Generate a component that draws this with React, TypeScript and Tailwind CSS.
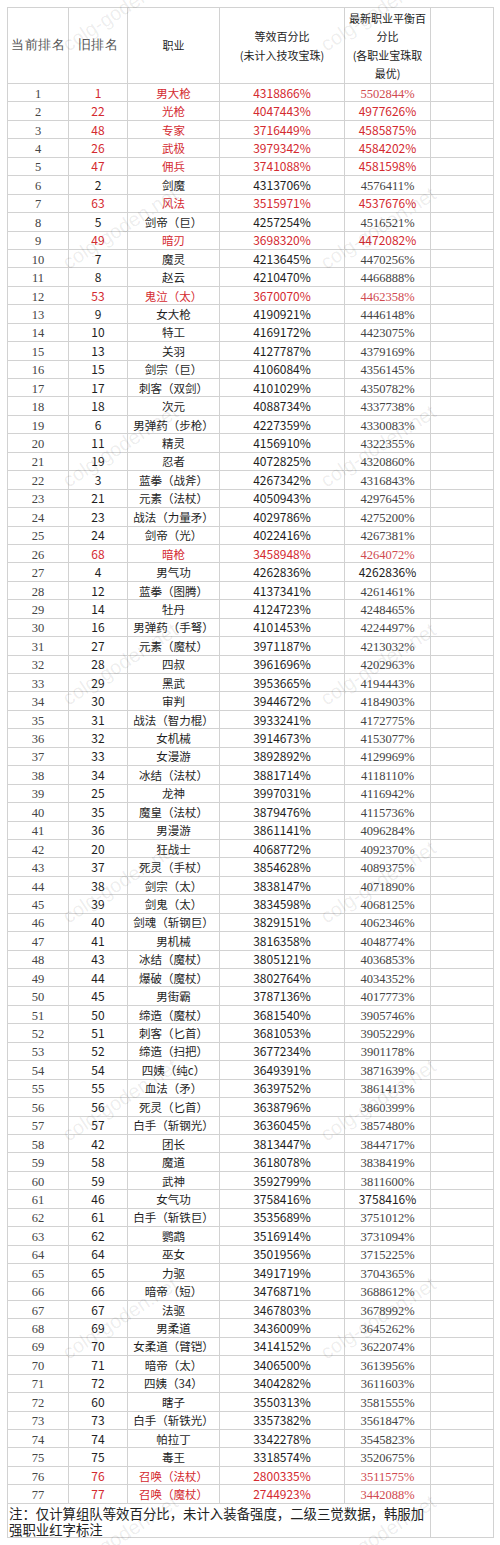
import React from 'react';

type Row = [number, number, string, string, string];

const rows: Row[] = [
  [1, 1, '男大枪', '4318866%', '5502844%'],
  [2, 22, '光枪', '4047443%', '4977626%'],
  [3, 48, '专家', '3716449%', '4585875%'],
  [4, 26, '武极', '3979342%', '4584202%'],
  [5, 47, '佣兵', '3741088%', '4581598%'],
  [6, 2, '剑魔', '4313706%', '4576411%'],
  [7, 63, '风法', '3515971%', '4537676%'],
  [8, 5, '剑帝（巨）', '4257254%', '4516521%'],
  [9, 49, '暗刃', '3698320%', '4472082%'],
  [10, 7, '魔灵', '4213645%', '4470256%'],
  [11, 8, '赵云', '4210470%', '4466888%'],
  [12, 53, '鬼泣（太）', '3670070%', '4462358%'],
  [13, 9, '女大枪', '4190921%', '4446148%'],
  [14, 10, '特工', '4169172%', '4423075%'],
  [15, 13, '关羽', '4127787%', '4379169%'],
  [16, 15, '剑宗（巨）', '4106084%', '4356145%'],
  [17, 17, '刺客（双剑）', '4101029%', '4350782%'],
  [18, 18, '次元', '4088734%', '4337738%'],
  [19, 6, '男弹药（步枪）', '4227359%', '4330083%'],
  [20, 11, '精灵', '4156910%', '4322355%'],
  [21, 19, '忍者', '4072825%', '4320860%'],
  [22, 3, '蓝拳（战斧）', '4267342%', '4316843%'],
  [23, 21, '元素（法杖）', '4050943%', '4297645%'],
  [24, 23, '战法（力量矛）', '4029786%', '4275200%'],
  [25, 24, '剑帝（光）', '4022416%', '4267381%'],
  [26, 68, '暗枪', '3458948%', '4264072%'],
  [27, 4, '男气功', '4262836%', '4262836%'],
  [28, 12, '蓝拳（图腾）', '4137341%', '4261461%'],
  [29, 14, '牡丹', '4124723%', '4248465%'],
  [30, 16, '男弹药（手弩）', '4101453%', '4224497%'],
  [31, 27, '元素（魔杖）', '3971187%', '4213032%'],
  [32, 28, '四叔', '3961696%', '4202963%'],
  [33, 29, '黑武', '3953665%', '4194443%'],
  [34, 30, '审判', '3944672%', '4184903%'],
  [35, 31, '战法（智力棍）', '3933241%', '4172775%'],
  [36, 32, '女机械', '3914673%', '4153077%'],
  [37, 33, '女漫游', '3892892%', '4129969%'],
  [38, 34, '冰结（法杖）', '3881714%', '4118110%'],
  [39, 25, '龙神', '3997031%', '4116942%'],
  [40, 35, '魔皇（法杖）', '3879476%', '4115736%'],
  [41, 36, '男漫游', '3861141%', '4096284%'],
  [42, 20, '狂战士', '4068772%', '4092370%'],
  [43, 37, '死灵（手杖）', '3854628%', '4089375%'],
  [44, 38, '剑宗（太）', '3838147%', '4071890%'],
  [45, 39, '剑鬼（太）', '3834598%', '4068125%'],
  [46, 40, '剑魂（斩钢巨）', '3829151%', '4062346%'],
  [47, 41, '男机械', '3816358%', '4048774%'],
  [48, 43, '冰结（魔杖）', '3805121%', '4036853%'],
  [49, 44, '爆破（魔杖）', '3802764%', '4034352%'],
  [50, 45, '男街霸', '3787136%', '4017773%'],
  [51, 50, '缔造（魔杖）', '3681540%', '3905746%'],
  [52, 51, '刺客（匕首）', '3681053%', '3905229%'],
  [53, 52, '缔造（扫把）', '3677234%', '3901178%'],
  [54, 54, '四姨（纯c）', '3649391%', '3871639%'],
  [55, 55, '血法（矛）', '3639752%', '3861413%'],
  [56, 56, '死灵（匕首）', '3638796%', '3860399%'],
  [57, 57, '白手（斩钢光）', '3636045%', '3857480%'],
  [58, 42, '团长', '3813447%', '3844717%'],
  [59, 58, '魔道', '3618078%', '3838419%'],
  [60, 59, '武神', '3592799%', '3811600%'],
  [61, 46, '女气功', '3758416%', '3758416%'],
  [62, 61, '白手（斩铁巨）', '3535689%', '3751012%'],
  [63, 62, '鹦鹉', '3516914%', '3731094%'],
  [64, 64, '巫女', '3501956%', '3715225%'],
  [65, 65, '力驱', '3491719%', '3704365%'],
  [66, 66, '暗帝（短）', '3476871%', '3688612%'],
  [67, 67, '法驱', '3467803%', '3678992%'],
  [68, 69, '男柔道', '3436009%', '3645262%'],
  [69, 70, '女柔道（臂铠）', '3414152%', '3622074%'],
  [70, 71, '暗帝（太）', '3406500%', '3613956%'],
  [71, 72, '四姨（34）', '3404282%', '3611603%'],
  [72, 60, '瞎子', '3550313%', '3581555%'],
  [73, 73, '白手（斩铁光）', '3357382%', '3561847%'],
  [74, 74, '帕拉丁', '3342278%', '3545823%'],
  [75, 75, '毒王', '3318574%', '3520675%'],
  [76, 76, '召唤（法杖）', '2800335%', '3511575%'],
  [77, 77, '召唤（魔杖）', '2744923%', '3442088%'],
];

// 韩服加强职业（红字）
const redRows = new Set([1, 2, 3, 4, 5, 7, 9, 12, 26, 76, 77]);
// last column drawn in the sans font instead of the serif one
const sansLast = new Set([2, 3, 4, 5, 7, 9, 27, 61]);

const sans = "font-['Noto_Sans_CJK_SC','Noto_Sans',sans-serif]";
const serif = "font-['Liberation_Serif','DejaVu_Serif',serif]";
const cell = 'border border-[#d2d2d2] p-0 text-center align-middle';

const Watermarks: React.FC = () => {
  const marks = [];
  for (let k = 0; k < 8; k++) {
    const cy = 10 + 218 * k;
    for (const cx of [120, 378]) {
      marks.push(
        <span
          key={`${k}-${cx}`}
          className="absolute w-[170px] text-center text-[20px] leading-none text-black/[0.08] font-['Liberation_Sans',sans-serif] -rotate-[33deg] whitespace-nowrap"
          style={{ left: cx - 85, top: cy - 10 }}
        >
          colg-goden.net
        </span>
      );
    }
  }
  return <div className="pointer-events-none absolute inset-0 overflow-hidden">{marks}</div>;
};

export default function App() {
  return (
    <div className="relative w-[500px] h-[1545px] bg-white pt-[7px] pl-[7px] overflow-hidden">
      <table className={`border-collapse table-fixed w-[486px] ${sans}`}>
        <colgroup>
          <col className="w-[61px]" />
          <col className="w-[59px]" />
          <col className="w-[92px]" />
          <col className="w-[125px]" />
          <col className="w-[86px]" />
          <col className="w-[63px]" />
        </colgroup>
        <thead>
          <tr className="h-[76px] text-[11px] leading-[18.5px]">
            <th className={`${cell} ${serif} text-[12.5px] font-normal text-[#555] tracking-[0.5px]`}>当前排名</th>
            <th className={`${cell} ${serif} text-[12.5px] font-normal text-[#555] tracking-[0.5px]`}>旧排名</th>
            <th className={`${cell} font-normal text-[#222]`}>职业</th>
            <th className={`${cell} font-normal text-[#222]`}>
              <div>等效百分比</div>
              <div>(未计入技攻宝珠)</div>
            </th>
            <th className={`${cell} font-normal text-[#222]`}>
              <div>最新职业平衡百</div>
              <div>分比</div>
              <div>(各职业宝珠取</div>
              <div>最优)</div>
            </th>
            <th className={cell}></th>
          </tr>
        </thead>
        <tbody>
          {rows.map(([cur, old, job, eq, best]) => {
            const red = redRows.has(cur);
            const tone = red ? 'text-[#d42a30]' : 'text-[#1e1e1e]';
            const lastSans = sansLast.has(cur);
            return (
              <tr key={cur} className="h-[18.44px] leading-[14px]">
                <td className={`${cell} ${serif} text-[12.5px] text-[#444] pt-[2px]`}>{cur}</td>
                <td className={`${cell} text-[12px] ${tone}`}>{old}</td>
                <td className={`${cell} text-[11.5px] ${tone} whitespace-nowrap`}>{job}</td>
                <td className={`${cell} text-[12px] ${tone}`}>{eq}</td>
                <td
                  className={`${cell} ${
                    lastSans
                      ? `text-[12px] ${tone}`
                      : `${serif} text-[12.5px] pt-[2px] ${red ? 'text-[#d04a50]' : 'text-[#444]'}`
                  }`}
                >
                  {best}
                </td>
                <td className={cell}></td>
              </tr>
            );
          })}
          <tr className="h-[34px]">
            <td colSpan={5} className={`${cell} text-left align-top pl-[1px] pt-[1px] text-[13.4px] leading-[16px] text-[#222]`}>
              注：仅计算组队等效百分比，未计入装备强度，二级三觉数据，韩服加强职业红字标注
            </td>
            <td className={cell}></td>
          </tr>
        </tbody>
      </table>
      <Watermarks />
    </div>
  );
}
